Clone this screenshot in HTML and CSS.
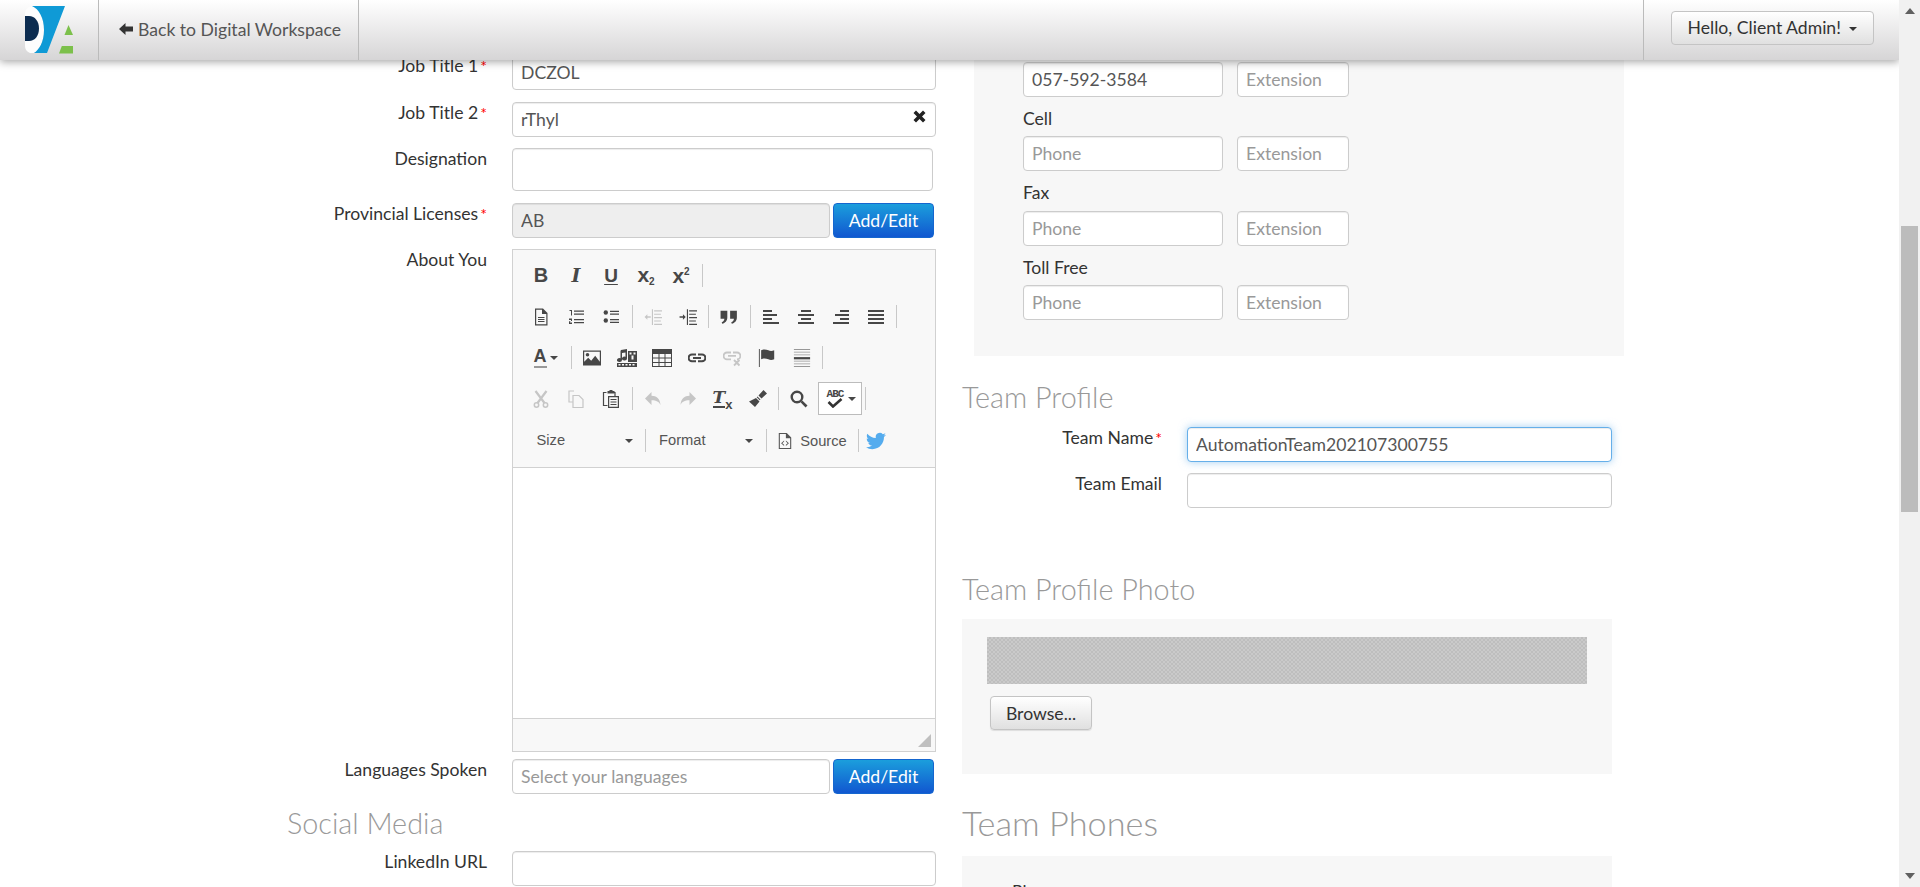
FILE: index.html
```html
<!DOCTYPE html>
<html lang="en">
<head>
    <meta charset="UTF-8">
    <title>Edit Profile</title>
    <link rel="stylesheet" href="styles.css">
</head>
<body>
    <svg class="icon-defs" aria-hidden="true">
        <symbol id="i-doc" viewBox="0 0 16 18"><path d="M2 .5h8l4.500 4.500v12.500H2zM3.200 1.700v14.600h10.100V6H9V1.700zM5 9h6.500v1H5zM5 11h6.500v1H5zM5 13h6.500v1H5z" fill-rule="evenodd"/></symbol>
        <symbol id="i-ol" viewBox="0 0 16 16"><path d="M1.500 1H4v5.500H3V2H1.500zM1 9.500h3V12H2v1.500h2V15H1v-2.800h2v-1.300H1zM6 1.500h10v1.300H6zM6 4.500h10v1.300H6zM6 10h10v1.300H6zM6 13h10v1.300H6z"/></symbol>
        <symbol id="i-ul" viewBox="0 0 16 16"><circle cx="2.800" cy="3.500" r="2.200"/><circle cx="2.800" cy="11.500" r="2.200"/><path d="M7 1.800h9v1.300H7zM7 4.500h9v1.300H7zM7 10h9v1.300H7zM7 12.800h9v1.300H7z"/></symbol>
        <symbol id="i-outdent" viewBox="0 0 16 16"><path d="M.5 8L3 5.500v1.800h3v1.400H3v1.800zM7 1h1v14H7zM9 2h7v1H9zM9 5h6v1H9zM9 8h7v1H9zM9 11h6v1H9zM9 14h7v1H9z"/></symbol>
        <symbol id="i-indent" viewBox="0 0 16 16"><path d="M6 8L3.500 5.500v1.800H.5v1.400h3v1.800zM7 1h1v14H7zM9 2h7v1H9zM9 5h6v1H9zM9 8h7v1H9zM9 11h6v1H9zM9 14h7v1H9z"/></symbol>
        <symbol id="i-quote" viewBox="0 0 16 16"><path d="M.5 2.500h6v6c0 3-2 5-4.500 5.500l-.5-1.400c1.400-.5 2.200-1.500 2.400-3.100H.5zM9 2.500h6v6c0 3-2 5-4.500 5.500l-.5-1.400c1.400-.5 2.200-1.500 2.400-3.100H9z"/></symbol>
        <symbol id="i-left" viewBox="0 0 16 16"><path d="M0 1h9v2H0zM0 5h14v2H0zM0 9h9v2H0zM0 13h16v2H0z"/></symbol>
        <symbol id="i-center" viewBox="0 0 16 16"><path d="M3 1h10v2H3zM0 5h16v2H0zM3 9h10v2H3zM0 13h16v2H0z"/></symbol>
        <symbol id="i-right" viewBox="0 0 16 16"><path d="M7 1h9v2H7zM2 5h14v2H2zM7 9h9v2H7zM0 13h16v2H0z"/></symbol>
        <symbol id="i-justify" viewBox="0 0 16 16"><path d="M0 1h16v2H0zM0 5h16v2H0zM0 9h16v2H0zM0 13h16v2H0z"/></symbol>
        <symbol id="i-image" viewBox="0 0 18 16"><path fill-rule="evenodd" d="M0 .5h18v15H0zM1.200 1.700v10l4-4 3 3 4-5 4.600 6v-10zM4.500 3a1.800 1.800 0 1 1 0 3.600 1.800 1.800 0 0 1 0-3.600z"/></symbol>
        <symbol id="i-flash" viewBox="0 0 20 18"><path fill-rule="evenodd" d="M4 1l6-1v9.500a2.500 2 0 1 1-1.500-1.800V3.500L5 4v7a2.500 2 0 1 1-1.500-1.800V2zM11 2h9v11h-9zM12.500 3.500v2h2v-2zM16.500 3.500v2h2v-2zM14.500 6.500v4h2v-4zM0 14h20v4H0zM1.500 15v1.500h2V15zM5 15v1.500h2V15zM8.500 15v1.500h2V15zM12 15v1.500h2V15zM15.500 15v1.500h2V15z"/></symbol>
        <symbol id="i-table" viewBox="0 0 20 18"><path fill-rule="evenodd" d="M0 0h20v18H0zM1 5v3.500h5.500V5zM7.500 5v3.500h5V5zM13.500 5v3.500H19V5zM1 9.500V13h5.500V9.500zM7.500 9.500V13h5V9.500zM13.500 9.500V13H19V9.500zM1 14v3h5.500v-3zM7.500 14v3h5v-3zM13.500 14v3H19v-3z"/></symbol>
        <symbol id="i-link" viewBox="0 0 18 12"><path fill="none" stroke="currentColor" stroke-width="2" d="M8 2.500H4a3.300 3.300 0 0 0 0 6.800h4M10 2.500h4a3.300 3.300 0 0 1 0 6.800h-4M5 5.900h8"/></symbol>
        <symbol id="i-unlink" viewBox="0 0 18 16"><path fill="none" stroke="currentColor" stroke-width="1.800" d="M8 2.500H4a3.300 3.300 0 0 0 0 6.800h4M10 2.500h4a3.300 3.300 0 0 1 0 6.800M5 5.900h8M11 10l5.500 5.500M16.500 10L11 15.500"/></symbol>
        <symbol id="i-flag" viewBox="0 0 18 20"><path d="M0 0h1v20H0zM2.500 1.500c3-1.500 5.500-1 8 0 2 .8 4 .8 6.500 0v10c-2.500.8-4.500.8-6.500 0-2.500-1-5-1.500-8 0z"/></symbol>
        <symbol id="i-hr" viewBox="0 0 18 20"><path d="M0 0h18v1H0zM0 3h18v1H0zM0 6h18v1H0zM0 13h18v1H0zM0 16h18v1H0zM0 19h18v1H0z" opacity=".55"/><path d="M0 9h18v2.500H0z"/></symbol>
        <symbol id="i-cut" viewBox="0 0 16 18"><path fill="none" stroke="currentColor" stroke-width="2.200" d="M2.500 1l9 12M13.500 1l-9 12"/><circle cx="3.500" cy="15" r="2.200" fill="none" stroke="currentColor" stroke-width="1.500"/><circle cx="12.500" cy="15" r="2.200" fill="none" stroke="currentColor" stroke-width="1.500"/></symbol>
        <symbol id="i-copy" viewBox="0 0 16 18"><path fill="none" stroke="currentColor" stroke-width="1.200" d="M6 1H1v11h3.500M5 5.500h6l4 4v8H5z"/></symbol>
        <symbol id="i-paste" viewBox="0 0 16 18"><path fill="none" stroke="currentColor" stroke-width="1.200" d="M3.500 2.500h-3v13h4M12 6V2.500h-1"/><path d="M4.500 2.500V1h2V0h3v1h2v2.500h-7z"/><path fill-rule="evenodd" d="M5 6h11v12H5zM6.200 7.200v9.600h8.600V7.200zM7.500 9h6v1h-6zM7.500 11.500h6v1h-6zM7.500 14h6v1h-6z"/></symbol>
        <symbol id="i-undo" viewBox="0 0 16 14"><path d="M6.500 0v3.800c5 0 8.500 2.800 9 9.200-1.600-3.200-4-4.700-9-4.700V13L0 6.500z"/></symbol>
        <symbol id="i-redo" viewBox="0 0 16 14"><path d="M9.500 0v3.800c-5 0-8.500 2.800-9 9.200 1.600-3.200 4-4.700 9-4.700V13L16 6.500z"/></symbol>
        <symbol id="i-brush" viewBox="0 0 18 18"><path d="M14.500 0L18 3.500 12.500 8.500 9.500 5.500zM8.500 6.500l3 3-.8.8-3-3zM7 8l3.500 3.500L6 17 0 11.500z"/></symbol>
        <symbol id="i-find" viewBox="0 0 18 18"><circle cx="7" cy="7" r="5.300" fill="none" stroke="currentColor" stroke-width="2.400"/><path d="M10.500 12.200l1.800-1.800 5.200 5.200-1.900 1.900z"/></symbol>
        <symbol id="i-check" viewBox="0 0 16 10"><path fill="none" stroke="currentColor" stroke-width="2.600" d="M1.500 4l4.500 4.500L14.500 1"/></symbol>
        <symbol id="i-source" viewBox="0 0 16 18"><path fill-rule="evenodd" d="M1 0h9l5 5v13H1zM2.200 1.200v15.600h11.600V6H9V1.200z"/><path d="M7 8.500v1.200L5 11.500l2 1.800v1.200l-3.400-3zM9 8.500l3.400 3-3.400 3v-1.200l2-1.800-2-1.800z"/></symbol>
        <symbol id="i-twitter" viewBox="0 0 24 24"><path d="M23.953 4.570a10 10 0 0 1-2.825.775 4.958 4.958 0 0 0 2.163-2.723c-.951.555-2.005.959-3.127 1.184a4.920 4.920 0 0 0-8.384 4.482C7.690 8.095 4.067 6.130 1.640 3.162a4.822 4.822 0 0 0-.666 2.475c0 1.710.870 3.213 2.188 4.096a4.904 4.904 0 0 1-2.228-.616v.060a4.923 4.923 0 0 0 3.946 4.827 4.996 4.996 0 0 1-2.212.085 4.936 4.936 0 0 0 4.604 3.417 9.867 9.867 0 0 1-6.102 2.105c-.390 0-.779-.023-1.170-.067a13.995 13.995 0 0 0 7.557 2.209c9.053 0 13.998-7.496 13.998-13.985 0-.210 0-.420-.015-.630A9.935 9.935 0 0 0 24 4.590z"/></symbol>
    </svg>

    <div class="viewport">
        <header class="topbar">
            <a class="topbar-logo" href="#">
                <svg width="50" height="50" viewBox="0 0 50 50">
                    <path d="M7 1C14 4 19 13 19 25S14 45 9 48H5C1 46 0 44 0 40V8C0 5 3 2 7 1z" fill="#fdfdfd"/>
                    <path d="M0 11h4c6 0 10 5.500 10 12.500S10 36 4 36H0z" fill="#0c2c50"/>
                    <path d="M7 1h33L22 48H9c5-3 10-11 10-23C19 13 14 4 7 1z" fill="#0f9ad6"/>
                    <path d="M43.500 20l4.500 10H39.500z" fill="#7cc04b"/>
                    <path d="M36.800 41H48v7.500H34z" fill="#7cc04b"/>
                </svg>
            </a>
            <a class="topbar-back" href="#">
                <svg class="back-arrow" width="14" height="12" viewBox="0 0 14 12"><path d="M6.500 0v3.500H14v5H6.500V12L0 6z"/></svg>
                Back to Digital Workspace
            </a>
            <div class="topbar-user">
                <button class="user-btn" type="button">Hello, Client Admin! <span class="caret"></span></button>
            </div>
        </header>

        <main class="page">
            <section class="col-left">
                <div class="form-row">
                    <label>Job Title 1<span class="req">*</span></label>
                    <input type="text" value="DCZOL">
                </div>
                <div class="form-row">
                    <label>Job Title 2<span class="req">*</span></label>
                    <div class="clear-wrap">
                        <input type="text" value="rThyl">
                        <svg class="clear-x" width="13" height="13" viewBox="0 0 13 13"><path d="M3 .5L6.500 4 10 .5 12.500 3 9 6.500l3.500 3.500L10 12.500 6.500 9 3 12.500.5 10 4 6.500.5 3z"/></svg>
                    </div>
                </div>
                <div class="form-row">
                    <label>Designation</label>
                    <input class="input-designation" type="text">
                </div>
                <div class="form-row">
                    <label>Provincial Licenses<span class="req">*</span></label>
                    <div class="input-add">
                        <input type="text" value="AB" readonly>
                        <button class="btn-add" type="button">Add/Edit</button>
                    </div>
                </div>
                <div class="form-row form-row-editor">
                    <label>About You</label>
                    <div class="editor">
                        <div class="toolbar">
                            <div class="tb-row">
                                <span class="tb-btn tb-b">B</span>
                                <span class="tb-btn tb-i">I</span>
                                <span class="tb-btn tb-u">U</span>
                                <span class="tb-btn tb-x"><span>x<sub>2</sub></span></span>
                                <span class="tb-btn tb-x"><span>x<sup>2</sup></span></span>
                                <span class="tb-sep"></span>
                            </div>
                            <div class="tb-row">
                                <span class="tb-btn"><svg class="ico ico-doc"><use href="#i-doc"/></svg></span>
                                <span class="tb-btn"><svg class="ico"><use href="#i-ol"/></svg></span>
                                <span class="tb-btn"><svg class="ico"><use href="#i-ul"/></svg></span>
                                <span class="tb-sep"></span>
                                <span class="tb-btn off"><svg class="ico ico-18"><use href="#i-outdent"/></svg></span>
                                <span class="tb-btn"><svg class="ico ico-18"><use href="#i-indent"/></svg></span>
                                <span class="tb-sep"></span>
                                <span class="tb-btn"><svg class="ico ico-18"><use href="#i-quote"/></svg></span>
                                <span class="tb-sep"></span>
                                <span class="tb-btn"><svg class="ico"><use href="#i-left"/></svg></span>
                                <span class="tb-btn"><svg class="ico"><use href="#i-center"/></svg></span>
                                <span class="tb-btn"><svg class="ico"><use href="#i-right"/></svg></span>
                                <span class="tb-btn"><svg class="ico"><use href="#i-justify"/></svg></span>
                                <span class="tb-sep"></span>
                            </div>
                            <div class="tb-row">
                                <span class="tb-btn tb-color"><span class="tb-a">A</span><span class="caret"></span></span>
                                <span class="tb-sep"></span>
                                <span class="tb-btn"><svg class="ico ico-18"><use href="#i-image"/></svg></span>
                                <span class="tb-btn"><svg class="ico ico-20"><use href="#i-flash"/></svg></span>
                                <span class="tb-btn"><svg class="ico ico-20"><use href="#i-table"/></svg></span>
                                <span class="tb-btn"><svg class="ico ico-18 ico-link"><use href="#i-link"/></svg></span>
                                <span class="tb-btn off"><svg class="ico ico-18"><use href="#i-unlink"/></svg></span>
                                <span class="tb-btn"><svg class="ico ico-18"><use href="#i-flag"/></svg></span>
                                <span class="tb-btn"><svg class="ico ico-18"><use href="#i-hr"/></svg></span>
                                <span class="tb-sep"></span>
                            </div>
                            <div class="tb-row">
                                <span class="tb-btn off"><svg class="ico ico-18"><use href="#i-cut"/></svg></span>
                                <span class="tb-btn off"><svg class="ico ico-18"><use href="#i-copy"/></svg></span>
                                <span class="tb-btn"><svg class="ico ico-18"><use href="#i-paste"/></svg></span>
                                <span class="tb-sep"></span>
                                <span class="tb-btn off"><svg class="ico"><use href="#i-undo"/></svg></span>
                                <span class="tb-btn off"><svg class="ico"><use href="#i-redo"/></svg></span>
                                <span class="tb-btn tb-tx"><span class="tx-t">T</span><small>x</small></span>
                                <span class="tb-btn"><svg class="ico ico-18"><use href="#i-brush"/></svg></span>
                                <span class="tb-sep"></span>
                                <span class="tb-btn"><svg class="ico ico-18"><use href="#i-find"/></svg></span>
                                <span class="tb-spell">
                                    <span class="spell-mark"><span class="spell-abc">ABC</span><svg class="spell-check"><use href="#i-check"/></svg></span>
                                    <span class="caret"></span>
                                </span>
                                <span class="tb-sep"></span>
                            </div>
                            <div class="tb-row tb-row-last">
                                <span class="tb-combo tb-combo-size">Size <span class="caret"></span></span>
                                <span class="tb-sep"></span>
                                <span class="tb-combo tb-combo-format">Format <span class="caret"></span></span>
                                <span class="tb-sep"></span>
                                <span class="tb-source"><svg class="ico"><use href="#i-source"/></svg><span class="source-text">Source</span></span>
                                <span class="tb-sep"></span>
                                <span class="tb-twitter"><svg width="20" height="20"><use href="#i-twitter"/></svg></span>
                            </div>
                        </div>
                        <div class="editor-body"></div>
                        <div class="editor-foot"><span class="grip"></span></div>
                    </div>
                </div>
                <div class="form-row form-row-lang">
                    <label>Languages Spoken</label>
                    <div class="input-add">
                        <input type="text" placeholder="Select your languages">
                        <button class="btn-add" type="button">Add/Edit</button>
                    </div>
                </div>
                <h3 class="section-title title-social">Social Media</h3>
                <div class="form-row">
                    <label>LinkedIn URL</label>
                    <input type="text">
                </div>
            </section>

            <section class="col-right">
                <div class="panel panel-phones">
                    <div class="phone-inputs">
                        <input class="phone" type="text" value="057-592-3584">
                        <input class="ext" type="text" placeholder="Extension">
                    </div>
                    <div class="phone-label">Cell</div>
                    <div class="phone-inputs">
                        <input class="phone" type="text" placeholder="Phone">
                        <input class="ext" type="text" placeholder="Extension">
                    </div>
                    <div class="phone-label">Fax</div>
                    <div class="phone-inputs">
                        <input class="phone" type="text" placeholder="Phone">
                        <input class="ext" type="text" placeholder="Extension">
                    </div>
                    <div class="phone-label">Toll Free</div>
                    <div class="phone-inputs">
                        <input class="phone" type="text" placeholder="Phone">
                        <input class="ext" type="text" placeholder="Extension">
                    </div>
                </div>

                <h3 class="section-title title-team">Team Profile</h3>
                <div class="form-row form-row-team">
                    <label>Team Name<span class="req">*</span></label>
                    <input class="focused" type="text" value="AutomationTeam202107300755">
                </div>
                <div class="form-row form-row-team">
                    <label>Team Email</label>
                    <input type="text">
                </div>

                <h3 class="section-title title-photo">Team Profile Photo</h3>
                <div class="panel panel-photo">
                    <div class="photo-box"></div>
                    <button class="btn-browse" type="button">Browse...</button>
                </div>

                <h2 class="title-phones">Team Phones</h2>
                <div class="panel panel-team-phones">
                    <div class="phone-label">Phone</div>
                </div>
            </section>
        </main>
    </div>

    <div class="scrollbar">
        <span class="arrow-up"></span>
        <span class="thumb"></span>
        <span class="arrow-down"></span>
    </div>
</body>
</html>
```

FILE: styles.css
```css
* {
    box-sizing: border-box;
}

html,
body {
    height: 100%;
}

body {
    margin: 0;
    display: flex;
    overflow: hidden;
    background-color: #fff;
    font-family: 'Lato', 'Open Sans', sans-serif;
    font-size: 17.6px;
    line-height: 21px;
    color: #333;
}

.icon-defs {
    position: absolute;
    width: 0;
    height: 0;
}

.viewport {
    flex: 1;
    height: 887px;
    overflow: hidden;
    position: relative;
}

/* top bar */
.topbar {
    position: absolute;
    top: 0;
    left: 0;
    right: 0;
    height: 60px;
    z-index: 10;
    display: flex;
    background: linear-gradient(to bottom, #ffffff, #d6d5d6);
    box-shadow: 0 2px 8px rgba(0, 0, 0, 0.35);
}

.topbar-logo {
    width: 99px;
    border-right: 1px solid #bbb;
    padding: 5px 0 0 25px;
}

.topbar-back {
    width: 260px;
    border-right: 1px solid #bbb;
    padding: 0 0 2px 20px;
    display: flex;
    align-items: center;
    gap: 5px;
    color: #555;
    text-decoration: none;
}

.back-arrow {
    fill: #333;
}

.topbar-user {
    margin-left: auto;
    width: 256px;
    border-left: 1px solid #bbb;
    padding: 11px 0 0 27px;
}

.user-btn {
    width: 203px;
    height: 34px;
    padding: 0 0 2px;
    border: 1px solid #c4c4c4;
    border-radius: 4px;
    background: linear-gradient(to bottom, #ffffff, #e0e0e0);
    font-family: inherit;
    font-size: 17.6px;
    color: #333;
}

.caret {
    display: inline-block;
    width: 0;
    height: 0;
    margin-left: 4px;
    vertical-align: middle;
    border-top: 4px solid #333;
    border-left: 4px solid transparent;
    border-right: 4px solid transparent;
}

/* page columns */
.page {
    display: flex;
    gap: 26px;
    padding: 55px 0 0 287px;
}

.col-left {
    width: 649px;
}

.col-right {
    width: 650px;
    margin-top: -55px;
}

.form-row {
    display: grid;
    grid-template-columns: 200px 1fr;
    column-gap: 25px;
    margin-bottom: 11.5px;
}

.form-row-team {
    margin-bottom: 11px;
}

.form-row label {
    text-align: right;
    white-space: nowrap;
}

.req {
    color: #f00;
    font-size: 16px;
    margin-left: 2px;
}

input {
    display: block;
    width: 100%;
    height: 35px;
    padding: 6px 8px;
    border: 1px solid #ccc;
    border-radius: 4px;
    background-color: #fff;
    box-shadow: inset 0 1px 1px rgba(0, 0, 0, 0.075);
    font-family: inherit;
    font-size: 17.6px;
    color: #555;
}

input::placeholder {
    color: #999;
    opacity: 1;
}

input[readonly] {
    background-color: #eee;
}

input.focused {
    border-color: #66afe9;
    box-shadow: inset 0 1px 1px rgba(0, 0, 0, 0.075), 0 0 8px rgba(102, 175, 233, 0.6);
}

.input-designation {
    width: 421px;
    height: 43px;
}

.clear-wrap {
    position: relative;
}

.clear-x {
    position: absolute;
    top: 8px;
    right: 10px;
    fill: #222;
}

.input-add {
    display: flex;
    gap: 3px;
    width: 422px;
}

.input-add input {
    width: 318px;
}

.btn-add {
    width: 101px;
    height: 35px;
    padding: 0;
    border: 1px solid #1566cf;
    border-radius: 4px;
    background: linear-gradient(to bottom, #1b9edc, #1157d0);
    font-family: inherit;
    font-size: 17.6px;
    color: #fff;
}

/* rich text editor */
.form-row-editor {
    margin-bottom: 6.5px;
}

.editor {
    height: 503px;
    display: flex;
    flex-direction: column;
    border: 1px solid #d1d1d1;
    background-color: #f8f8f8;
}

.toolbar {
    height: 218px;
    padding: 5px 0 0 10.5px;
    border-bottom: 1px solid #d1d1d1;
}

.tb-row {
    display: flex;
    align-items: center;
    height: 41px;
}

.tb-row-last {
    padding-top: 2px;
}

.tb-btn {
    flex: none;
    width: 35px;
    height: 32px;
    display: flex;
    align-items: center;
    justify-content: center;
    color: #474747;
    font-family: 'Liberation Sans', sans-serif;
}

.tb-btn.off {
    color: #c6c6c6;
}

.tb-sep {
    flex: none;
    width: 1px;
    height: 23px;
    margin: 0 2.5px 0 3px;
    background-color: #c8c8c8;
}

.ico {
    width: 16px;
    height: 16px;
    fill: currentColor;
}

.ico-doc {
    height: 18px;
}

.ico-18 {
    width: 18px;
    height: 18px;
}

.ico-20 {
    width: 20px;
    height: 18px;
}

.ico-link {
    height: 12px;
}

.tb-b {
    font-weight: 700;
    font-size: 20px;
}

.tb-i {
    font-family: 'DejaVu Serif', serif;
    font-style: italic;
    font-weight: 700;
    font-size: 19px;
}

.tb-u {
    font-weight: 700;
    font-size: 19px;
    text-decoration: underline;
    text-underline-offset: 2px;
}

.tb-x {
    font-weight: 700;
    font-size: 21px;
    line-height: 1;
}

.tb-x sub,
.tb-x sup {
    font-size: 10px;
    line-height: 1;
}

.tb-x sub {
    vertical-align: -3px;
}

.tb-x sup {
    vertical-align: 8px;
}

.tb-color {
    width: 44px;
    gap: 0;
}

.tb-color .caret {
    border-top-color: #474747;
    margin-left: 3px;
}

.tb-a {
    font-weight: 700;
    font-size: 18px;
    line-height: 19px;
    border-bottom: 2px solid #999;
}

.tb-tx {
    font-family: 'DejaVu Serif', serif;
    font-style: italic;
    font-weight: 700;
    font-size: 17px;
    line-height: 19px;
    align-items: flex-start;
    padding-top: 6px;
}

.tx-t {
    border-bottom: 2px solid #474747;
    line-height: 17px;
}

.tb-tx small {
    font-family: 'Liberation Sans', sans-serif;
    font-style: normal;
    font-size: 13px;
    line-height: 13px;
    margin-top: 9px;
}

.tb-spell {
    flex: none;
    width: 44px;
    height: 33px;
    margin-left: 1px;
    display: flex;
    align-items: center;
    padding-left: 7px;
    border: 1px solid #bcbcbc;
    background-color: #fff;
}

.tb-spell .caret {
    margin-left: 3px;
    border-top-color: #474747;
}

.spell-mark {
    width: 19px;
    display: flex;
    flex-direction: column;
    align-items: center;
}

.spell-abc {
    font-family: 'Liberation Mono', monospace;
    font-size: 11px;
    font-weight: 700;
    line-height: 10px;
    letter-spacing: -1px;
    color: #474747;
}

.spell-check {
    width: 16px;
    height: 10px;
    margin-top: -1px;
    color: #333;
}

.tb-combo {
    flex: none;
    height: 32px;
    display: flex;
    align-items: center;
    justify-content: space-between;
    font-family: 'Liberation Sans', sans-serif;
    font-size: 14.7px;
    color: #555;
}

.tb-combo-size {
    width: 118px;
    padding: 0 9px 0 13px;
}

.tb-combo-format {
    width: 114.7px;
    padding: 0 10px 0 11px;
}

.tb-combo .caret {
    border-top-color: #474747;
}

.tb-source {
    flex: none;
    width: 85.5px;
    padding-left: 8px;
    display: flex;
    align-items: center;
    gap: 7px;
    font-family: 'Liberation Sans', sans-serif;
    font-size: 14.7px;
    color: #555;
}

.source-text {
    padding-top: 2px;
}

.tb-twitter {
    flex: none;
    margin-left: 5px;
    display: flex;
    fill: #55acee;
}

.editor-body {
    height: 250px;
    background-color: #fff;
}

.editor-foot {
    flex: 1;
    border-top: 1px solid #d1d1d1;
    display: flex;
    justify-content: flex-end;
    align-items: flex-end;
    padding: 0 4px 4px 0;
}

.grip {
    width: 13px;
    height: 13px;
    background-color: #bfbfbf;
    clip-path: polygon(100% 0, 100% 100%, 0 100%);
}

.form-row-lang {
    margin-bottom: 14px;
}

/* headings */
.section-title {
    margin: 0 0 13px;
    font-size: 28.8px;
    font-weight: 300;
    line-height: 30px;
    color: #999;
}

.title-social {
    margin-bottom: 13px;
}

.title-team {
    margin: 26px 0 15px;
}

.title-photo {
    margin: 66px 0 15px;
}

.title-phones {
    margin: 29px 0 13px;
    font-size: 34.3px;
    font-weight: 300;
    line-height: 40px;
    color: #999;
}

/* right column panels */
.panel {
    background-color: #f7f7f7;
}

.panel-phones {
    margin: 0 -12px 0 12px;
    height: 356px;
    padding: 62px 0 0 49px;
}

.phone-inputs {
    display: flex;
    gap: 14px;
}

.phone {
    width: 200px;
}

.ext {
    width: 112px;
}

.phone-label {
    margin: 11px 0 7.4px;
}

.panel-photo {
    height: 155px;
    padding: 18px 25px 0;
}

.photo-box {
    height: 47px;
    background: repeating-conic-gradient(#bebebe 0 25%, #cacaca 0 50%) 0 0 / 4px 4px;
}

.btn-browse {
    display: block;
    width: 102px;
    height: 34px;
    margin: 12px 0 0 3px;
    padding: 0;
    border: 1px solid #c4c4c4;
    border-radius: 4px;
    background: linear-gradient(to bottom, #ffffff, #e0e0e0);
    box-shadow: 0 1px 1px rgba(0, 0, 0, 0.1);
    font-family: inherit;
    font-size: 17.6px;
    color: #333;
}

.panel-team-phones {
    height: 120px;
    padding: 14px 0 0 50px;
}

/* window scrollbar */
.scrollbar {
    flex: none;
    width: 21px;
    height: 887px;
    display: flex;
    flex-direction: column;
    align-items: center;
    background-color: #f1f1f1;
}

.arrow-up {
    margin-top: 8px;
    border-bottom: 6px solid #606060;
    border-left: 5px solid transparent;
    border-right: 5px solid transparent;
}

.thumb {
    width: 17px;
    height: 286px;
    margin-top: 212px;
    background-color: #bcbcbc;
}

.arrow-down {
    margin-top: auto;
    margin-bottom: 8px;
    border-top: 6px solid #606060;
    border-left: 5px solid transparent;
    border-right: 5px solid transparent;
}
```
